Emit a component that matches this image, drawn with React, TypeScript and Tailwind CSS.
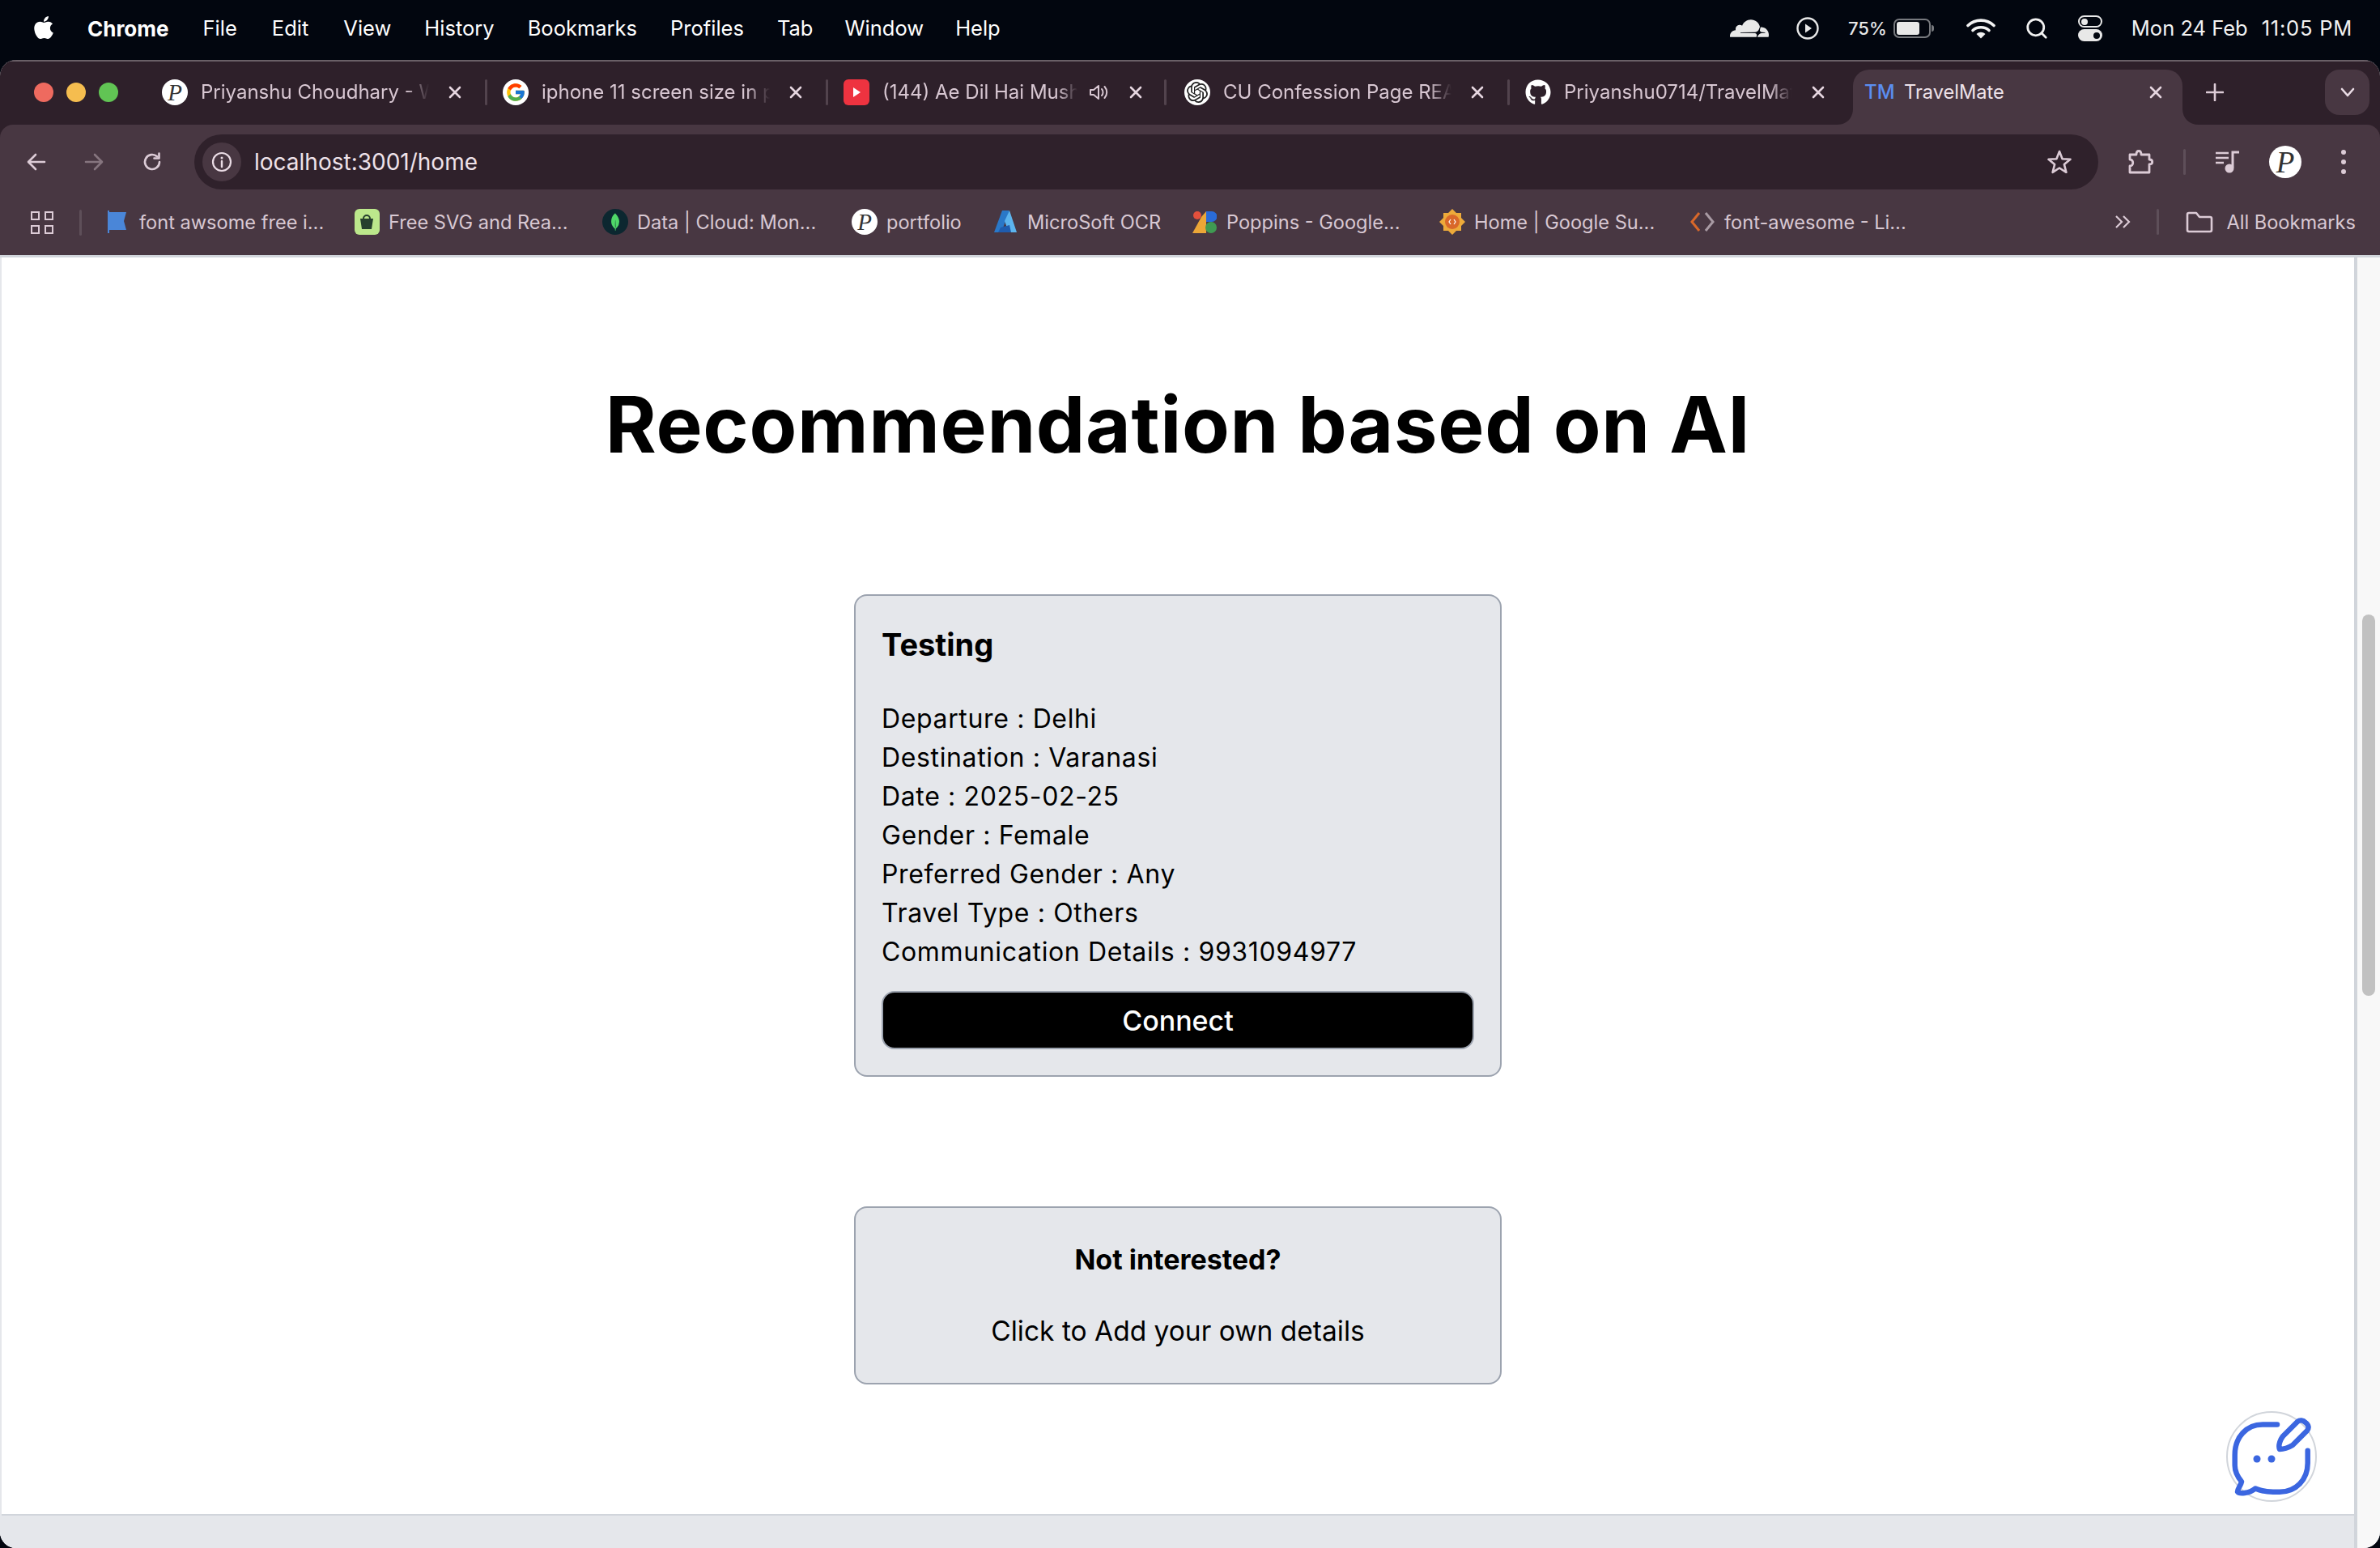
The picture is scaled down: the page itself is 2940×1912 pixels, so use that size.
import React from "react";
import { FcGoogle } from "react-icons/fc";
import { SiOpenai, SiMongodb, SiCloudflare } from "react-icons/si";
import { FaGithub, FaApple } from "react-icons/fa";
import { Search } from "lucide-react";

const Avatar = ({ size }: { size: "s" | "l" }) => (
  <div className={size === "s" ? "w-[32px] h-[32px] rounded-full bg-white flex items-center justify-center overflow-hidden shrink-0" : "w-[40px] h-[40px] rounded-full bg-white flex items-center justify-center overflow-hidden shrink-0"}>
    <span className={size === "s" ? "text-[29px] leading-none italic text-[#333] font-['Liberation_Serif',serif]" : "text-[37px] leading-none italic text-[#333] font-['Liberation_Serif',serif]"}>P</span>
  </div>
);

const CloseX = () => (
  <svg width="16" height="16" viewBox="0 0 16 16" className="shrink-0">
    <path d="M2 2L14 14M14 2L2 14" stroke="#e6d6e0" strokeWidth="2.6" strokeLinecap="round" />
  </svg>
);

const Speaker = () => (
  <svg width="26" height="24" viewBox="0 0 26 24" fill="none" className="shrink-0 mr-[24px]">
    <path d="M2 9h4l6-5v16l-6-5H2z" stroke="#d8c7d2" strokeWidth="2" strokeLinejoin="round" />
    <path d="M16 8c2 2 2 6 0 8M19.5 5c3.6 4 3.6 10 0 14" stroke="#d8c7d2" strokeWidth="2" strokeLinecap="round" />
  </svg>
);

const Tab = ({ icon, title, sound, last }: { icon: React.ReactNode; title: string; sound?: boolean; last?: boolean }) => (
  <div className={last ? "w-[405px] h-[68px] pb-[12px] flex items-center shrink-0" : "w-[421px] h-[68px] pb-[12px] flex items-center shrink-0"}>
    {icon}
    <div className={sound ? "ml-[16px] w-[241px] mr-[14px] whitespace-nowrap overflow-hidden text-[24px] text-[#d8c7d2] [mask-image:linear-gradient(to_right,black_90%,transparent)]" : "ml-[16px] w-[282px] mr-[24px] whitespace-nowrap overflow-hidden text-[24px] text-[#d8c7d2] [mask-image:linear-gradient(to_right,black_90%,transparent)]"}>
      {title}
    </div>
    {sound && <Speaker />}
    <CloseX />
    {!last && <div className={sound ? "ml-[27px] w-[3px] h-[32px] rounded bg-[#52434d]" : "ml-[29px] w-[3px] h-[32px] rounded bg-[#52434d]"} />}
  </div>
);

const Bookmark = ({ className, icon, text, tight }: { className: string; icon: React.ReactNode; text: string; tight?: boolean }) => (
  <div className={className}>
    <div className={tight ? "w-[32px] h-[32px] flex items-center justify-start shrink-0" : "w-[32px] h-[32px] flex items-center justify-center shrink-0"}>{icon}</div>
    <span className={tight ? "ml-[8px] text-[23.6px] text-[#d8c8d2] whitespace-nowrap" : "ml-[11px] text-[23.6px] text-[#d8c8d2] whitespace-nowrap"}>{text}</span>
  </div>
);

const Line = ({ children }: { children: React.ReactNode }) => <p className="h-[48px] leading-[48px]">{children}</p>;

export default function App() {
  return (
    <div className="w-[2940px] h-[1912px] bg-[#02060f] flex flex-col overflow-hidden font-['Inter',sans-serif]">
      {/* Menu bar */}
      <div className="h-[74px] pb-[4px] shrink-0 flex items-center text-white text-[25.5px]">
        <FaApple className="ml-[39px] w-[30px] h-[32px] text-white -mt-[3px]" />
        <div className="ml-[39px] flex items-center gap-[41px]">
          <span className="font-bold text-[26px] mr-[1px]">Chrome</span>
          <span>File</span>
          <span className="ml-[2px]">Edit</span>
          <span className="ml-[2px]">View</span>
          <span>History</span>
          <span>Bookmarks</span>
          <span>Profiles</span>
          <span>Tab</span>
          <span className="-ml-[2px]">Window</span>
          <span className="-ml-[2px]">Help</span>
        </div>
        <div className="ml-auto pr-[34px] flex items-center text-[#f2f2f2]">
          <SiCloudflare className="w-[48px] h-[48px] text-[#e8e8e8]" />
          <svg width="28" height="28" viewBox="0 0 28 28" className="ml-[34px]" fill="none">
            <circle cx="14" cy="14" r="12.5" stroke="#e8e8e8" strokeWidth="2.4" />
            <path d="M11 8.5L19 14L11 19.5z" fill="#e8e8e8" />
          </svg>
          <span className="ml-[36px] text-[22px] font-medium text-[#e8e8e8]">75%</span>
          <div className="ml-[8px] flex items-center">
            <div className="w-[46px] h-[24px] rounded-[7px] border-2 border-[#77797e] p-[2px]">
              <div className="w-[28px] h-full rounded-[3px] bg-[#e8e8e8]" />
            </div>
            <div className="w-[3px] h-[8px] rounded-r bg-[#77797e] ml-[1px]" />
          </div>
          <svg width="36" height="26" viewBox="0 0 36 26" className="ml-[40px]" fill="none">
            <path d="M2 9.5C11 1 25 1 34 9.5" stroke="#f2f2f2" strokeWidth="3.6" strokeLinecap="round" />
            <path d="M8 15.5C13.5 10.5 22.5 10.5 28 15.5" stroke="#f2f2f2" strokeWidth="3.6" strokeLinecap="round" />
            <path d="M12.5 20L18 25.5L23.5 20C20 17 16 17 12.5 20z" fill="#f2f2f2" />
          </svg>
          <Search className="ml-[36px] w-[30px] h-[30px] text-[#f2f2f2]" strokeWidth={2.2} />
          <div className="ml-[36px] w-[30px] flex flex-col gap-[2px]">
            <div className="h-[15px] rounded-full border-2 border-[#e8e8e8] flex items-center px-[2px]">
              <div className="w-[8px] h-[8px] rounded-full bg-[#e8e8e8]" />
            </div>
            <div className="h-[15px] rounded-full bg-[#e8e8e8] flex items-center justify-end px-[3px]">
              <div className="w-[8px] h-[8px] rounded-full bg-[#02060f]" />
            </div>
          </div>
          <span className="ml-[36px] whitespace-nowrap">Mon 24 Feb</span>
          <span className="ml-[17px] whitespace-nowrap tracking-[0.03em]">11:05 PM</span>
        </div>
      </div>

      {/* Browser window */}
      <div className="flex-1 rounded-[20px] overflow-hidden flex flex-col bg-[#e5e7eb]">
        {/* Tab strip */}
        <div className="h-[80px] shrink-0 bg-[#2e202a] border-t-2 border-[#6a6067] flex items-end">
          <div className="w-[200px] h-[68px] pb-[12px] shrink-0 flex items-center pl-[42px] gap-[16px]">
            <div className="w-[24px] h-[24px] rounded-full bg-[#ee6a5f]" />
            <div className="w-[24px] h-[24px] rounded-full bg-[#f5bd4f]" />
            <div className="w-[24px] h-[24px] rounded-full bg-[#61c454]" />
          </div>
          <Tab icon={<Avatar size="s" />} title="Priyanshu Choudhary - Wikipedia" />
          <Tab
            icon={
              <div className="w-[32px] h-[32px] rounded-full bg-white flex items-center justify-center shrink-0">
                <FcGoogle className="w-[26px] h-[26px]" />
              </div>
            }
            title="iphone 11 screen size in pixels"
          />
          <Tab
            icon={
              <div className="w-[32px] h-[32px] rounded-[6px] bg-[#ee3340] flex items-center justify-center shrink-0">
                <svg width="12" height="14" viewBox="0 0 12 14"><path d="M2 1L11 7L2 13z" fill="#fff" /></svg>
              </div>
            }
            title="(144) Ae Dil Hai Mushkil"
            sound
          />
          <Tab
            icon={
              <div className="w-[32px] h-[32px] rounded-full bg-white flex items-center justify-center shrink-0">
                <SiOpenai className="w-[26px] h-[26px] text-[#222]" />
              </div>
            }
            title="CU Confession Page REACT"
          />
          <Tab icon={<FaGithub className="w-[32px] h-[32px] text-white shrink-0" />} title="Priyanshu0714/TravelMate" last />
          <div className="relative w-[407px] h-[68px] pl-[14px] pb-[12px] shrink-0 flex items-center bg-[#483742] rounded-t-[20px]">
            <svg width="20" height="20" viewBox="0 0 20 20" className="absolute -left-[20px] bottom-0"><path d="M20 0V20H0C12 20 20 12 20 0z" fill="#483742" /></svg>
            <svg width="20" height="20" viewBox="0 0 20 20" className="absolute -right-[20px] bottom-0"><path d="M0 0V20H20C8 20 0 12 0 0z" fill="#483742" /></svg>
            <span className="w-[36px] text-[24px] font-medium text-[#5b8ef0]">TM</span>
            <span className="ml-[13px] w-[303px] text-[23.6px] text-[#eee2e9]">TravelMate</span>
            <CloseX />
          </div>
          <svg width="22" height="22" viewBox="0 0 22 22" className="ml-[29px] mb-[29px] shrink-0">
            <path d="M11 1V21M1 11H21" stroke="#dccbd6" strokeWidth="2.6" strokeLinecap="round" />
          </svg>
          <div className="ml-auto mr-[13px] mb-[12px] w-[55px] h-[56px] rounded-[18px] bg-[#483742] flex items-center justify-center">
            <svg width="18" height="12" viewBox="0 0 18 12" fill="none"><path d="M2 2L9 10L16 2" stroke="#eadce5" strokeWidth="2.6" strokeLinecap="round" strokeLinejoin="round" /></svg>
          </div>
        </div>

        {/* Toolbar */}
        <div className="h-[80px] shrink-0 bg-[#2e202a]">
          <div className="h-full bg-[#483742] rounded-t-[16px] flex items-start pt-[12px]">
            <div className="w-[240px] h-[68px] shrink-0 flex items-center relative">
              <svg width="26" height="26" viewBox="0 0 26 26" fill="none" className="ml-[32px]">
                <path d="M23 13H4M12 4L3 13L12 22" stroke="#dccbd6" strokeWidth="2.6" strokeLinecap="round" strokeLinejoin="round" />
              </svg>
              <svg width="26" height="26" viewBox="0 0 26 26" fill="none" className="ml-[45px]">
                <path d="M3 13H22M14 4L23 13L14 22" stroke="#86757f" strokeWidth="2.6" strokeLinecap="round" strokeLinejoin="round" />
              </svg>
              <svg width="26" height="26" viewBox="0 0 26 26" fill="none" className="ml-[46px]">
                <path d="M22 13a9 9 0 1 1-3-6.7" stroke="#dccbd6" strokeWidth="2.6" strokeLinecap="round" />
                <path d="M21.5 2.5V8.5H15.5" stroke="#dccbd6" strokeWidth="2.6" strokeLinecap="round" strokeLinejoin="round" />
              </svg>
            </div>
            <div className="w-[2352px] h-[68px] rounded-full bg-[#2f212b] flex items-center pl-[10px] pr-[32px] shrink-0">
              <div className="w-[48px] h-[48px] rounded-full bg-[#483742] flex items-center justify-center">
                <svg width="26" height="26" viewBox="0 0 26 26" fill="none">
                  <circle cx="13" cy="13" r="11" stroke="#eadce5" strokeWidth="2.2" />
                  <path d="M13 12V19" stroke="#eadce5" strokeWidth="2.4" strokeLinecap="round" />
                  <circle cx="13" cy="8" r="1.5" fill="#eadce5" />
                </svg>
              </div>
              <span className="ml-[16px] text-[28px] text-[#eee2e9]">localhost:3001/home</span>
              <svg width="32" height="32" viewBox="0 0 32 32" fill="none" className="ml-auto">
                <path d="M16 3L19.6 12.2L29.5 12.8L21.9 19.1L24.4 28.8L16 23.5L7.6 28.8L10.1 19.1L2.5 12.8L12.4 12.2z" stroke="#dccbd6" strokeWidth="2.6" strokeLinejoin="round" />
              </svg>
            </div>
            <div className="flex-1 h-[68px] flex items-center">
              <svg width="34" height="34" viewBox="0 0 34 34" fill="none" className="ml-[36px]">
                <path d="M3 8H11C11 2 17 2 17 8H27V14C32 14 32 20 27 20V30H3V22C8 22 8 14 3 14z" stroke="#dccbd6" strokeWidth="2.8" strokeLinejoin="round" />
              </svg>
              <div className="ml-[35px] w-[3px] h-[32px] rounded bg-[#5e4f59]" />
              <svg width="32" height="32" viewBox="0 0 32 32" className="ml-[36px]" fill="none">
                <path d="M1 5H17M1 11H17M1 17H11" stroke="#dccbd6" strokeWidth="2.6" />
                <path d="M22 23V4H30" stroke="#dccbd6" strokeWidth="3" />
                <circle cx="18" cy="24" r="5.5" fill="#dccbd6" />
              </svg>
              <div className="ml-[35px]"><Avatar size="l" /></div>
              <div className="ml-[49px] flex flex-col gap-[6px]">
                <div className="w-[6px] h-[6px] rounded-full bg-[#dccbd6]" />
                <div className="w-[6px] h-[6px] rounded-full bg-[#dccbd6]" />
                <div className="w-[6px] h-[6px] rounded-full bg-[#dccbd6]" />
              </div>
            </div>
          </div>
        </div>

        {/* Bookmarks bar */}
        <div className="h-[84px] shrink-0 bg-[#483742] border-b-[3px] border-[#d1d5db] flex items-center">
          <div className="w-[98px] flex justify-end pr-[32px] shrink-0">
            <div className="grid grid-cols-2 gap-[6px]">
              <div className="w-[11px] h-[11px] border-2 border-[#dccbd6]" />
              <div className="w-[11px] h-[11px] border-2 border-[#dccbd6]" />
              <div className="w-[11px] h-[11px] border-2 border-[#dccbd6]" />
              <div className="w-[11px] h-[11px] border-2 border-[#dccbd6]" />
            </div>
          </div>
          <div className="w-[3px] h-[32px] rounded bg-[#5e4f59] shrink-0" />
          <div className="w-[31px] shrink-0" />
          <Bookmark
            tight
            className="w-[305px] flex items-center shrink-0"
            icon={<svg width="26" height="32" viewBox="0 0 26 32"><path d="M2 4h22l-3 11 3 11H3z" fill="#4a86d8" /><path d="M2 2V30" stroke="#4a86d8" strokeWidth="2" /></svg>}
            text="font awsome free i..."
          />
          <Bookmark
            className="w-[307px] flex items-center shrink-0"
            icon={
              <div className="w-[31px] h-[32px] rounded-[6px] bg-[#bce88c] flex items-center justify-center">
                <svg width="20" height="22" viewBox="0 0 20 22"><path d="M6 7a4 4 0 0 1 8 0" stroke="#26402e" strokeWidth="2" fill="none" /><path d="M2 7H18L16 20H4z" fill="#26402e" /></svg>
              </div>
            }
            text="Free SVG and Rea..."
          />
          <Bookmark
            className="w-[308px] flex items-center shrink-0"
            icon={
              <div className="w-[32px] h-[32px] rounded-full bg-[#0c2730] flex items-center justify-center">
                <SiMongodb className="w-[22px] h-[26px] text-[#4fd768]" />
              </div>
            }
            text="Data | Cloud: Mon..."
          />
          <Bookmark className="w-[174px] flex items-center shrink-0" icon={<Avatar size="s" />} text="portfolio" />
          <Bookmark
            className="w-[246px] flex items-center shrink-0"
            icon={
              <svg width="30" height="30" viewBox="0 0 30 30">
                <path d="M11 1H20L10 28H1z" fill="#2a78c8" />
                <path d="M20 1L29 28H19L14 14z" fill="#5cb4ee" />
                <path d="M9 22L20 19L22 28H6z" fill="#1f5cae" />
              </svg>
            }
            text="MicroSoft OCR"
          />
          <Bookmark
            className="w-[306px] flex items-center shrink-0"
            icon={
              <svg width="30" height="28" viewBox="0 0 30 28">
                <circle cx="6" cy="6" r="5" fill="#e2503c" />
                <path d="M11 8L17 1V28H0z" fill="#eba637" />
                <path d="M17 1H24A6.5 6.5 0 0 1 24 14H17z" fill="#2a6bd8" />
                <circle cx="23" cy="21" r="7" fill="#3f9a52" />
              </svg>
            }
            text="Poppins - Google..."
          />
          <Bookmark
            className="w-[309px] flex items-center shrink-0"
            icon={
              <svg width="32" height="32" viewBox="0 0 32 32">
                <path d="M16 0L21 5H27V11L32 16L27 21V27H21L16 32L11 27H5V21L0 16L5 11V5H11z" fill="#edaa3a" />
                <circle cx="16" cy="16" r="9" fill="#d9682a" />
                <path d="M14 13L12 16L14 19M18 13L20 16L18 19" stroke="#fff" strokeWidth="1.2" fill="none" />
              </svg>
            }
            text="Home | Google Su..."
          />
          <Bookmark
            className="flex items-center shrink-0"
            icon={
              <svg width="32" height="28" viewBox="0 0 32 28" fill="none">
                <path d="M12 3L3 14L12 25" stroke="#d9682a" strokeWidth="3" />
                <path d="M20 3L29 14L20 25" stroke="#a89aa3" strokeWidth="3" />
              </svg>
            }
            text="font-awesome - Li..."
          />
          <div className="ml-auto flex items-center pr-[30px]">
            <svg width="20" height="20" viewBox="0 0 20 20" fill="none">
              <path d="M2 3L9 10L2 17M11 3L18 10L11 17" stroke="#dccbd6" strokeWidth="2.2" />
            </svg>
            <div className="ml-[32px] w-[3px] h-[32px] rounded bg-[#5e4f59]" />
            <svg width="34" height="28" viewBox="0 0 34 28" fill="none" className="ml-[33px]">
              <path d="M2 5a2 2 0 0 1 2-2h9l4 5h13a2 2 0 0 1 2 2v14a2 2 0 0 1-2 2H4a2 2 0 0 1-2-2z" stroke="#dccbd6" strokeWidth="2.6" strokeLinejoin="round" />
            </svg>
            <span className="ml-[16px] text-[23.6px] text-[#d8c8d2] whitespace-nowrap">All Bookmarks</span>
          </div>
        </div>

        {/* Viewport */}
        <div className="flex-1 flex min-h-0 bg-[#f8f8f8]">
          <div className="flex-1 flex flex-col min-w-0 pl-[2px] border-r-4 border-[#d1d5db] bg-[#e5e7eb] relative">
            <div className="flex-1 bg-white border-b-2 border-[#d1d5db] flex flex-col items-center pt-[134px] min-h-0 text-black">
              <h1 className="text-[96px] leading-[144px] font-bold tracking-[0.007em]">Recommendation based on AI</h1>
              <div className="mt-[138px] w-[800px] rounded-[16px] border-2 border-[#9ca3af] bg-[#e5e7eb] p-[32px]">
                <h2 className="text-[38px] leading-[56px] font-bold">Testing</h2>
                <div className="mt-[40px] text-[32px] tracking-[0.02em]">
                  <Line>Departure : Delhi</Line>
                  <Line>Destination : Varanasi</Line>
                  <Line>Date : 2025-02-25</Line>
                  <Line>Gender : Female</Line>
                  <Line>Preferred Gender : Any</Line>
                  <Line>Travel Type : Others</Line>
                  <Line>Communication Details : 9931094977</Line>
                </div>
                <button className="mt-[24px] w-full h-[72px] rounded-[16px] border-2 border-[#9ca3af] bg-black text-white text-[34px] font-medium">Connect</button>
              </div>
              <div className="mt-[160px] w-[800px] h-[220px] rounded-[16px] border-2 border-[#9ca3af] bg-[#e5e7eb] pt-[36px] text-center">
                <h3 className="text-[34px] leading-[56px] font-bold">Not interested?</h3>
                <p className="mt-[32px] text-[33.5px] leading-[56px]">Click to Add your own details</p>
              </div>
            </div>
            <div className="h-[40px] shrink-0" />
            <button className="absolute right-[46px] top-[1425px] w-[112px] h-[112px] rounded-full border-2 border-[#d1d5db] bg-white">
              <svg width="120" height="120" viewBox="0 0 120 120" fill="none" className="absolute -left-[6px] -top-[6px]">
                <path d="M67 20.5H49C29 20.5 14.7 36 14.7 58V71C14.7 79 18 85 23 91C22 96 18 100 18 103.5C20 106.5 32 106 40 99.5C47 102.5 54 103.7 62 103.7H70C90 103.7 104.7 89 104.7 68V52.7" stroke="#3b66e0" strokeWidth="6.5" strokeLinecap="round" strokeLinejoin="round" />
                <path d="M74 35L92 17C95 14.5 99 15 102 18C106 21 106.5 25 104 28L86 46C81 49 75 51 70 51C68 46 71 39 74 35z" stroke="#3b66e0" strokeWidth="6.5" strokeLinejoin="round" />
                <circle cx="42" cy="63" r="4.5" fill="#3b66e0" />
                <circle cx="60" cy="63" r="4.5" fill="#3b66e0" />
              </svg>
            </button>
          </div>
          <div className="w-[28px] shrink-0 pl-[6px] pr-[6px]">
            <div className="mt-[441px] w-[16px] h-[471px] rounded-full bg-[#c1c1c1]" />
          </div>
        </div>
      </div>
    </div>
  );
}
